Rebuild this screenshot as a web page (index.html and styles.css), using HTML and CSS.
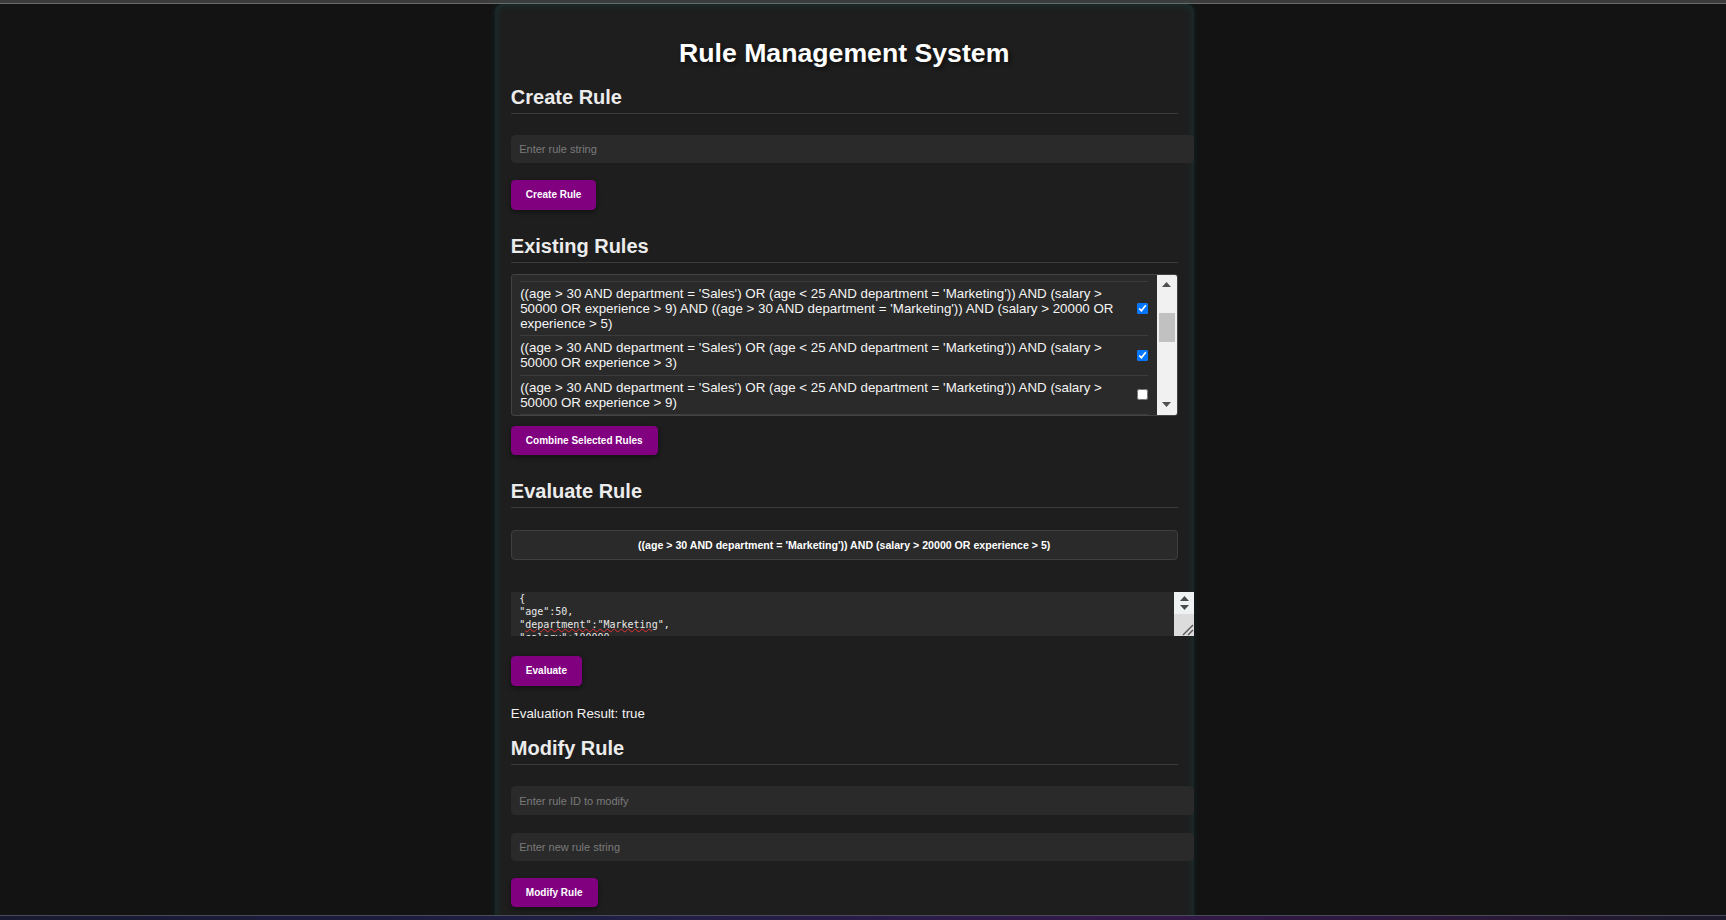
FILE: index.html
```html
<!DOCTYPE html>
<html lang="en">
<head>
<meta charset="utf-8">
<title>Rule Management System</title>
<link rel="stylesheet" href="styles.css">
</head>
<body>
<div class="topbar"></div>
<div class="page">
  <main class="container">
    <h1 class="title">Rule Management System</h1>

    <h2 class="section-title">Create Rule</h2>
    <input class="text-input" type="text" placeholder="Enter rule string">
    <button class="btn">Create Rule</button>

    <h2 class="section-title">Existing Rules</h2>
    <div class="rule-list">
      <div class="rule-list__view">
        <div class="rule-item">
          <span class="rule-item__text">((age &gt; 30 AND department = 'Sales') OR (age &lt; 25 AND department = 'Marketing')) AND (salary &gt; 50000 OR experience &gt; 9) AND ((age &gt; 30 AND department = 'Marketing')) AND (salary &gt; 20000 OR experience &gt; 5)</span>
          <input class="rule-item__check" type="checkbox" checked>
        </div>
        <div class="rule-item">
          <span class="rule-item__text">((age &gt; 30 AND department = 'Sales') OR (age &lt; 25 AND department = 'Marketing')) AND (salary &gt; 50000 OR experience &gt; 3)</span>
          <input class="rule-item__check" type="checkbox" checked>
        </div>
        <div class="rule-item">
          <span class="rule-item__text">((age &gt; 30 AND department = 'Sales') OR (age &lt; 25 AND department = 'Marketing')) AND (salary &gt; 50000 OR experience &gt; 9)</span>
          <input class="rule-item__check" type="checkbox">
        </div>
        <div class="rule-item">
          <span class="rule-item__text">((age &gt; 30 AND department = 'Marketing')) AND (salary &gt; 20000 OR experience &gt; 5)</span>
          <input class="rule-item__check" type="checkbox">
        </div>
      </div>
      <div class="scrollbar">
        <div class="scrollbar__btn">
          <svg width="9" height="5" viewBox="0 0 9 5"><path d="M0 5 L4.5 0 L9 5 Z" fill="#505050"/></svg>
        </div>
        <div class="scrollbar__track"><div class="scrollbar__thumb"></div></div>
        <div class="scrollbar__btn">
          <svg width="9" height="5" viewBox="0 0 9 5"><path d="M0 0 L4.5 5 L9 0 Z" fill="#505050"/></svg>
        </div>
      </div>
    </div>
    <button class="btn btn--after-list">Combine Selected Rules</button>

    <h2 class="section-title section-title--tight">Evaluate Rule</h2>
    <div class="rule-display">((age &gt; 30 AND department = 'Marketing')) AND (salary &gt; 20000 OR experience &gt; 5)</div>
    <div class="json-input" role="textbox" aria-multiline="true">
      <div class="json-input__text">{<br>"age":50,<br>"<span class="misspelled">department":"Marketing</span>",<br>"salary":100000<br>}</div>
      <div class="json-input__bar">
        <div class="json-input__spin">
          <svg width="9" height="5" viewBox="0 0 9 5"><path d="M0 5 L4.5 0 L9 5 Z" fill="#4a4a4a"/></svg>
          <svg width="9" height="5" viewBox="0 0 9 5"><path d="M0 0 L4.5 5 L9 0 Z" fill="#4a4a4a"/></svg>
        </div>
        <div class="json-input__resizer">
          <svg width="20" height="21" viewBox="0 0 20 21"><path d="M9 20 L19 10 M14 20 L19 15" stroke="#555" stroke-width="1.4" fill="none"/></svg>
        </div>
      </div>
    </div>
    <button class="btn btn--after-json">Evaluate</button>
    <p class="result">Evaluation Result: true</p>

    <h2 class="section-title">Modify Rule</h2>
    <input class="text-input" type="text" placeholder="Enter rule ID to modify">
    <input class="text-input" type="text" placeholder="Enter new rule string">
    <button class="btn">Modify Rule</button>
  </main>
</div>
<div class="bottom-strip"></div>
</body>
</html>
```
FILE: styles.css
```css
html, body {
  margin: 0;
  padding: 0;
  overflow: hidden;
  background: #131313;
  font-family: "Liberation Sans", Arial, sans-serif;
}

.topbar {
  height: 3px;
  background: #3c3c3c;
  border-bottom: 1px solid #6a6a6a;
}

.page {
  padding-right: 37px;
}

.container {
  width: 666.67px;
  margin: 0 auto;
  padding: 16.67px 16.67px 16.67px 16px;
  display: flex;
  flex-direction: column;
  align-items: flex-start;
  background: #1e1e1e;
  border-radius: 8px;
  box-shadow: 0 0 6px rgba(0, 170, 170, 0.12), inset 0 0 10px rgba(0, 170, 170, 0.16);
  color: #e6e6e6;
}

.title {
  align-self: stretch;
  margin: 17px 0 0;
  font-size: 26.67px;
  line-height: 31px;
  font-weight: bold;
  text-align: center;
  color: #ffffff;
  text-shadow: 2px 2px 4px rgba(0, 0, 0, 0.55);
}

.section-title {
  align-self: stretch;
  margin: 17px 0 10.5px;
  padding-bottom: 4.17px;
  font-size: 20px;
  line-height: 23px;
  font-weight: bold;
  color: #ececec;
  border-bottom: 1px solid #3a3a3a;
}

.section-title--tight {
  margin-top: 16px;
}

.text-input {
  width: 100%;
  box-sizing: content-box;
  margin: 10.33px 0 8.33px;
  padding: 8.33px;
  border: 0;
  border-radius: 4.17px;
  background: #2a2a2a;
  color: #e6e6e6;
  font-family: "Liberation Sans", Arial, sans-serif;
  font-size: 11px;
  outline: none;
}

.text-input + .text-input {
  margin-top: 9.33px;
}

.text-input::placeholder {
  color: #7a7a7a;
}

.btn {
  margin: 8.33px 0;
  padding: 9.33px 15px;
  border: 0;
  border-radius: 4.17px;
  background: #800080;
  color: #ffffff;
  font-family: "Liberation Sans", Arial, sans-serif;
  font-size: 10px;
  font-weight: bold;
  box-shadow: 0 2px 5px rgba(0, 0, 0, 0.45);
  cursor: pointer;
}

.btn--after-list {
  margin-top: 10px;
}

.btn--after-json {
  margin-top: 20px;
}

/* Existing rules list */
.rule-list {
  align-self: stretch;
  height: 140px;
  display: flex;
  border: 1px solid #434343;
  border-radius: 3px;
  background: #2a2a2a;
  overflow: hidden;
}

.rule-list__view {
  flex: 1;
  min-width: 0;
  overflow: hidden;
  padding: 6px 8.33px 0;
}

.rule-item {
  display: flex;
  align-items: center;
  gap: 12px;
  padding: 4px 0;
  border-top: 1px solid #3c3c3c;
}

.rule-item__text {
  flex: 1;
  font-size: 13.33px;
  line-height: 15.2px;
  color: #f5f5f5;
}

.rule-item__check {
  flex: none;
  width: 11px;
  height: 11px;
  margin: 0;
}

.scrollbar {
  flex: none;
  width: 20px;
  display: flex;
  flex-direction: column;
  background: #f1f1f1;
}

.scrollbar__btn {
  height: 20px;
  display: flex;
  align-items: center;
  justify-content: center;
}

.scrollbar__track {
  flex: 1;
  padding: 0 2px;
}

.scrollbar__thumb {
  margin-top: 18px;
  height: 29px;
  background: #c1c1c1;
}

/* Evaluate */
.rule-display {
  align-self: stretch;
  margin: 11.33px 0 8.33px;
  padding: 8px;
  border: 1px solid #3f3f3f;
  border-radius: 4px;
  background: #2a2a2a;
  color: #ffffff;
  font-size: 10.6px;
  font-weight: bold;
  line-height: 12px;
  text-align: center;
}

.json-input {
  width: calc(100% + 16.67px);
  height: 44px;
  margin-top: 24px;
  display: flex;
  background: #2a2a2a;
  overflow: hidden;
}

.json-input__text {
  flex: 1;
  padding: 0 8.33px;
  font-family: "DejaVu Sans Mono", "Liberation Mono", monospace;
  font-size: 10px;
  line-height: 13px;
  color: #e8e8e8;
  white-space: nowrap;
}

.misspelled {
  text-decoration: underline wavy #e23232;
  text-decoration-thickness: 1px;
  text-underline-offset: 0;
}

.json-input__bar {
  flex: none;
  width: 20px;
  display: flex;
  flex-direction: column;
}

.json-input__spin {
  height: 22px;
  display: flex;
  flex-direction: column;
  align-items: center;
  justify-content: center;
  gap: 4px;
  background: #eef2f2;
}

.json-input__resizer {
  flex: 1;
  background: #dcdcdc;
  display: flex;
  align-items: flex-end;
}

.json-input__resizer svg {
  display: block;
}

.result {
  margin: 12.5px 0 -1.5px;
  font-size: 13.33px;
  line-height: 15.33px;
  color: #f2f2f2;
}

.bottom-strip {
  position: fixed;
  left: 0;
  right: 0;
  bottom: 0;
  height: 4px;
  border-top: 1px solid #4a4a58;
  background: linear-gradient(90deg, #171a30 0%, #1f1f45 35%, #33194a 65%, #2a1838 85%, #1b1a2a 100%);
}
```
